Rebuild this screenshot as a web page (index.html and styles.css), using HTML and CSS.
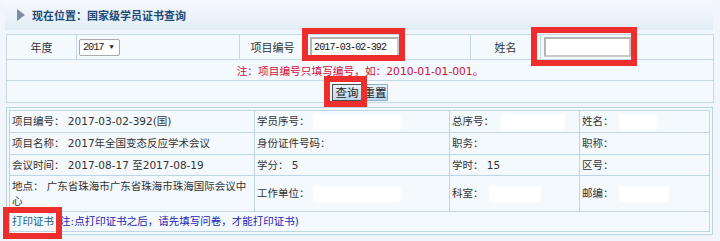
FILE: index.html
```html
<!DOCTYPE html>
<html lang="zh-CN">

<head>
  <meta charset="UTF-8">
  <title>国家级学员证书查询</title>
  <link rel="stylesheet" href="styles.css">
</head>

<body>
  <div class="crumb">
    <span class="arrow"></span>
    <span class="crumb-text">现在位置：国家级学员证书查询</span>
  </div>

  <table class="search">
    <tr class="row-fields">
      <td class="c1 label">年度</td>
      <td class="c2">
        <span class="select">2017<span class="caret">▼</span></span>
      </td>
      <td class="c3 label">项目编号</td>
      <td class="c4"><input type="text" class="field field-code" value="2017-03-02-392"></td>
      <td class="c5 label">姓名</td>
      <td class="c6"><input type="text" class="field field-name" value=""></td>
    </tr>
    <tr class="row-note">
      <td colspan="6" class="note">注：项目编号只填写编号，如：2010-01-01-001。</td>
    </tr>
    <tr class="row-buttons">
      <td colspan="6" class="buttons">
        <button type="button" class="btn btn-main">查询</button><button type="button" class="btn">重置</button>
      </td>
    </tr>
  </table>

  <div class="info">
    <table class="info-table">
      <tr class="r1">
        <td class="k1">项目编号：&nbsp;2017-03-02-392(国)</td>
        <td class="k2">学员序号：<span class="blank w-a"></span></td>
        <td class="k3">总序号：<span class="blank w-b"></span></td>
        <td class="k4">姓名：<span class="blank w-c"></span></td>
      </tr>
      <tr class="r2">
        <td>项目名称：&nbsp;2017年全国变态反应学术会议</td>
        <td>身份证件号码：</td>
        <td>职务：</td>
        <td>职称：</td>
      </tr>
      <tr class="r3">
        <td>会议时间：&nbsp;2017-08-17 至2017-08-19</td>
        <td>学分：&nbsp;5</td>
        <td>学时：&nbsp;15</td>
        <td>区号：</td>
      </tr>
      <tr class="r4">
        <td>地点：&nbsp;广东省珠海市广东省珠海市珠海国际会议中心</td>
        <td>工作单位：<span class="blank w-a"></span></td>
        <td>科室：<span class="blank w-d"></span></td>
        <td>邮编：<span class="blank w-e"></span></td>
      </tr>
      <tr class="r5">
        <td colspan="4"><a href="#" class="print-link">打印证书</a><span class="print-note">(注:点打印证书之后，请先填写问卷，才能打印证书)</span></td>
      </tr>
    </table>
  </div>

  <!-- 标注框 -->
  <div class="mark mark-code"></div>
  <div class="mark mark-query"></div>
  <div class="mark mark-name"></div>
  <div class="mark mark-print"></div>
</body>

</html>
```

FILE: styles.css
```css
* {
  margin: 0;
  padding: 0;
  box-sizing: border-box;
}

body {
  font-family: 'DejaVu Sans', 'Noto Sans CJK SC', sans-serif;
  font-size: 10.5px;
  color: #333;
  background: #f0f6fb;
  width: 720px;
  height: 241px;
  overflow: hidden;
  position: relative;
}

/* 顶部位置栏 */
.crumb {
  margin-left: 5px;
  width: 708px;
  height: 30px;
  display: flex;
  align-items: center;
  padding-left: 12px;
  background: linear-gradient(#f6f9fd 0%, #eef4fa 45%, #e2ebf5 100%);
}

.arrow {
  width: 0;
  height: 0;
  border-top: 6px solid transparent;
  border-bottom: 6px solid transparent;
  border-left: 8px solid #7d8fa5;
  margin-right: 7px;
  margin-top: -1px;
}

.crumb-text {
  font-size: 11px;
  font-weight: 700;
  color: #1c4a78;
  margin-top: -1px;
}

/* 查询表 */
.search {
  margin: 4px 0 0 6px;
  width: 707px;
  border-collapse: collapse;
  table-layout: fixed;
  background: #f3f9fd;
}

.search td {
  border: 1px solid #c3d9e6;
  padding: 0 2px;
  vertical-align: middle;
}

.search .label {
  text-align: center;
  color: #333;
  font-size: 11px;
}

.c1 { width: 70px; }
.c2 { width: 163px; }
.c3 { width: 66px; }
.c4 { width: 165px; }
.c5 { width: 70px; }
.c6 { width: 173px; }

.row-fields td { height: 25px; }
.row-note td { height: 21px; }
.row-buttons td { height: 22px; }

.select {
  display: inline-flex;
  align-items: center;
  width: 41px;
  height: 17px;
  padding-left: 3px;
  background: #fff;
  border: 1px solid #a9a9a9;
  border-radius: 2px;
  font-family: 'Liberation Mono', monospace;
  font-size: 10.5px;
  letter-spacing: -1.2px;
  color: #222;
}

.caret {
  font-size: 7px;
  margin-left: 6px;
  letter-spacing: 0;
}

.c4 .field { margin-left: 2px; }
.c6 .field { margin-left: 1px; }

.field {
  display: block;
  height: 20px;
  background: #fff;
  border: 2px solid #c8c8c8;
  border-top-color: #b4b4b4;
  border-left-color: #b4b4b4;
  font-family: 'Liberation Mono', monospace;
  font-size: 10px;
  letter-spacing: -0.85px;
  color: #111;
  padding: 0 2px;
  outline: none;
}

.field-code { width: 89px; }
.field-name { width: 87px; }

.note {
  text-align: center;
  color: #d0103a;
  font-size: 10.7px;
}

.buttons {
  text-align: center;
  font-size: 0;
}

.btn {
  font-family: 'Noto Sans CJK SC', sans-serif;
  font-size: 11.5px;
  line-height: 14px;
  width: 26px;
  height: 17px;
  padding: 0;
  color: #222;
  border: 1px solid #8fb0cc;
  background: linear-gradient(#e8f2fb, #bcd6ec);
  vertical-align: middle;
  margin-top: 1px;
}

.btn-main {
  width: 30px;
  border-color: #4a4a4a;
}

/* 信息表 */
.info {
  margin: 4px 0 0 6px;
  width: 707px;
  border: 1px solid #b9d4e4;
  padding: 2px;
  background: #f3f9fd;
}

.info-table {
  width: 701px;
  border-collapse: collapse;
  table-layout: fixed;
}

.info-table td {
  border: 1px solid #bcd6e5;
  padding: 0 2px;
  vertical-align: middle;
  line-height: 15px;
}

.k1 { width: 245px; }
.k2 { width: 195px; }
.k3 { width: 130px; }
.k4 { width: 130px; }

.r1 td { height: 22px; }
.r2 td { height: 22px; }
.r3 td { height: 21px; }
.r4 td { height: 36px; }
.r5 td { height: 20px; }

.blank {
  display: inline-block;
  height: 14px;
  vertical-align: middle;
  background: #fff;
  box-shadow: 0 0 3px 1px #fff;
}

.w-a { width: 86px; margin-left: 4px; }
.w-b { width: 62px; margin-left: 8px; }
.w-c { width: 36px; margin-left: 6px; }
.w-d { width: 50px; margin-left: 6px; }
.w-e { width: 48px; margin-left: 6px; }

.print-link {
  color: #1b5d86;
  text-decoration: none;
}

.print-note {
  color: #2323b0;
  margin-left: 2px;
}

/* 红色标注框 */
.mark {
  position: absolute;
  border: 6px solid #ee2d2d;
}

.mark-code {
  left: 302px;
  top: 28px;
  width: 103px;
  height: 33px;
}

.mark-query {
  left: 324px;
  top: 76px;
  width: 43px;
  height: 31px;
}

.mark-name {
  left: 531px;
  top: 27px;
  width: 106px;
  height: 39px;
}

.mark-print {
  left: 3px;
  top: 207px;
  width: 59px;
  height: 32px;
}
```
